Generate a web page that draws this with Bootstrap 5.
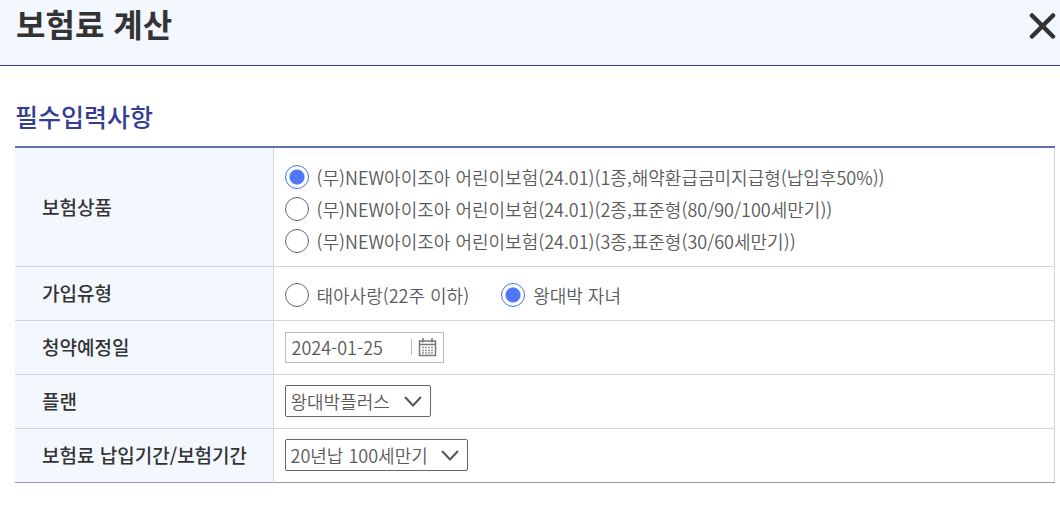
<!DOCTYPE html>
<html lang="ko">
<head>
<meta charset="utf-8">
<meta name="viewport" content="width=device-width, initial-scale=1">
<title>보험료 계산</title>
<link href="https://cdn.jsdelivr.net/npm/bootstrap@5.3.0/dist/css/bootstrap.min.css" rel="stylesheet">
<style>
  body { font-family: "Noto Sans CJK KR", sans-serif; font-size: 18px; line-height: 24px; color: #5a5a5a; font-weight: 350; }
  .calc-header { background: #f3f8ff; border-bottom: 1px solid #343f94; height: 66px; padding: 0 3px 0 16px; }
  .calc-title { font-size: 32px; line-height: 46px; font-weight: 700; color: #333; }
  .close-btn { width: 28px; height: 28px; margin-top: 12px; }
  .calc-body { padding: 34px 5px 24px 15px; }
  .section-title { font-size: 25px; line-height: 32px; font-weight: 500; color: #343f94; margin-bottom: 14px; }
  .calc-table { border-top: 2px solid #5c70b8; border-bottom: 1px solid #999; border-right: 1px solid #d5d5d5; }
  .calc-table th { width: 258px; background: #f3f8ff; color: #333; font-weight: 500; font-size: 19px; padding: 0 0 0 27px; border-right: 1px solid #d5d5d5; }
  .calc-table td { padding: 0 11px; height: 54px; }
  .calc-table tr + tr > * { border-top: 1px solid #d5d5d5; }
  .calc-table .products { height: 119px; padding-top: 4px; }
  .calc-table .kinds { padding-top: 4px; }
  .calc-table .form-check-input { width: 24px; height: 24px; margin: 0; border: 1px solid #666; flex: none; box-shadow: none; }
  .calc-table .form-check-input:checked { border-color: #4670f7; background: #fff radial-gradient(circle, #5077f7 0 7px, #fff 8px); }
  .option-row { height: 32px; }
  .date-box { width: 159px; height: 31px; border: 1px solid #bbb; padding: 0 6px; }
  .date-box input { width: 112px; color: inherit; font-weight: inherit; outline: 0; }
  .date-box .divider { width: 1px; height: 16px; background: #bbb; margin-right: 6px; }
  .calc-table select { width: auto; height: 32px; line-height: 24px; font-size: 18px; font-weight: inherit; color: inherit; border: 1px solid #666; border-radius: 2px; padding: 0 39px 0 5px;
    background: #fff url("data:image/svg+xml,%3Csvg xmlns='http://www.w3.org/2000/svg' viewBox='0 0 18 11'%3E%3Cpath d='M1 1l8 8.500 8-8.500' fill='none' stroke='%23555' stroke-width='2'/%3E%3C/svg%3E") no-repeat right 8px center / 18px 11px; }
</style>
</head>
<body>
<header class="calc-header d-flex justify-content-between align-items-start">
  <h1 class="calc-title m-0">보험료 계산</h1>
  <button type="button" class="close-btn btn p-0 border-0 d-flex" aria-label="닫기">
    <svg width="28" height="28" viewBox="0 0 28 28" fill="none" stroke="#333" stroke-width="4.500" stroke-linecap="round"><path d="M3 3.500L24 24.500M24 3.500L3 24.500"/></svg>
  </button>
</header>
<main class="calc-body">
  <h2 class="section-title">필수입력사항</h2>
  <table class="calc-table w-100 align-middle">
    <tbody>
      <tr>
        <th scope="row">보험상품</th>
        <td class="products">
          <div class="option-row d-flex align-items-center gap-2"><input class="form-check-input" type="radio" name="product" id="p1" checked><label for="p1">(무)NEW아이조아 어린이보험(24.01)(1종,해약환급금미지급형(납입후50%))</label></div>
          <div class="option-row d-flex align-items-center gap-2"><input class="form-check-input" type="radio" name="product" id="p2"><label for="p2">(무)NEW아이조아 어린이보험(24.01)(2종,표준형(80/90/100세만기))</label></div>
          <div class="option-row d-flex align-items-center gap-2"><input class="form-check-input" type="radio" name="product" id="p3"><label for="p3">(무)NEW아이조아 어린이보험(24.01)(3종,표준형(30/60세만기))</label></div>
        </td>
      </tr>
      <tr>
        <th scope="row">가입유형</th>
        <td class="kinds">
          <div class="d-flex flex-wrap column-gap-4">
            <div class="option-row d-flex align-items-center gap-2 me-2"><input class="form-check-input" type="radio" name="kind" id="k1"><label for="k1">태아사랑(22주 이하)</label></div>
            <div class="option-row d-flex align-items-center gap-2"><input class="form-check-input" type="radio" name="kind" id="k2" checked><label for="k2">왕대박 자녀</label></div>
          </div>
        </td>
      </tr>
      <tr>
        <th scope="row"><label for="date">청약예정일</label></th>
        <td>
          <div class="date-box d-flex align-items-center">
            <input class="border-0 p-0" type="text" id="date" value="2024-01-25">
            <span class="divider ms-auto"></span>
            <button type="button" class="btn p-0 border-0 d-flex" aria-label="날짜 선택">
              <svg width="19" height="19" viewBox="0 0 19 19" fill="none" stroke="#777"><path d="M1.500 3v14.500h16V3z" stroke-width="1.500"/><path d="M1 6.500h17M5 0v4.500M14 0v4.500" stroke-width="1.500"/><path d="M4 9.500h12M4 12.500h12M4 15h12" stroke-dasharray="2 1" stroke-width="1.500" stroke="#999"/></svg>
            </button>
          </div>
        </td>
      </tr>
      <tr>
        <th scope="row"><label for="plan">플랜</label></th>
        <td><select class="form-select" id="plan"><option>왕대박플러스</option></select></td>
      </tr>
      <tr>
        <th scope="row"><label for="term">보험료 납입기간/보험기간</label></th>
        <td><select class="form-select" id="term"><option>20년납 100세만기</option></select></td>
      </tr>
    </tbody>
  </table>
</main>
<script src="https://cdn.jsdelivr.net/npm/bootstrap@5.3.0/dist/js/bootstrap.bundle.min.js"></script>
</body>
</html>
